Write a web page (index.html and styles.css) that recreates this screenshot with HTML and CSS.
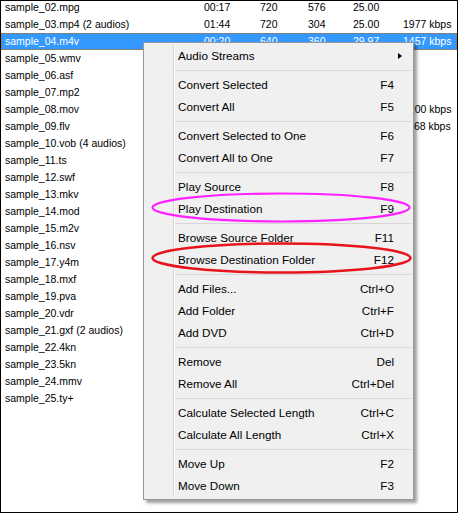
FILE: index.html
```html
<!DOCTYPE html>
<html>
<head>
<meta charset="utf-8">
<title>File list context menu</title>
<link rel="stylesheet" href="styles.css">
</head>
<body>
<div class="frame">
  <div class="list">
    <div class="row"><span>sample_02.mpg</span><span>00:17</span><span>720</span><span>576</span><span>25.00</span><span></span></div>
    <div class="row"><span>sample_03.mp4 (2 audios)</span><span>01:44</span><span>720</span><span>304</span><span>25.00</span><span>1977 kbps</span></div>
    <div class="row sel"><span>sample_04.m4v</span><span>00:20</span><span>640</span><span>360</span><span>29.97</span><span>1457 kbps</span></div>
    <div class="row"><span>sample_05.wmv</span></div>
    <div class="row"><span>sample_06.asf</span></div>
    <div class="row"><span>sample_07.mp2</span></div>
    <div class="row"><span>sample_08.mov</span><span></span><span></span><span></span><span></span><span>2200 kbps</span></div>
    <div class="row"><span>sample_09.flv</span><span></span><span></span><span></span><span></span><span>1168 kbps</span></div>
    <div class="row"><span>sample_10.vob (4 audios)</span></div>
    <div class="row"><span>sample_11.ts</span></div>
    <div class="row"><span>sample_12.swf</span></div>
    <div class="row"><span>sample_13.mkv</span></div>
    <div class="row"><span>sample_14.mod</span></div>
    <div class="row"><span>sample_15.m2v</span></div>
    <div class="row"><span>sample_16.nsv</span></div>
    <div class="row"><span>sample_17.y4m</span></div>
    <div class="row"><span>sample_18.mxf</span></div>
    <div class="row"><span>sample_19.pva</span></div>
    <div class="row"><span>sample_20.vdr</span></div>
    <div class="row"><span>sample_21.gxf (2 audios)</span></div>
    <div class="row"><span>sample_22.4kn</span></div>
    <div class="row"><span>sample_23.5kn</span></div>
    <div class="row"><span>sample_24.mmv</span></div>
    <div class="row"><span>sample_25.ty+</span></div>
  </div>

  <div class="menu">
    <div class="item"><span>Audio Streams</span><span></span><span class="sub"><i class="arrow"></i></span></div>
    <div class="sep"></div>
    <div class="item"><span>Convert Selected</span><span>F4</span><span></span></div>
    <div class="item"><span>Convert All</span><span>F5</span><span></span></div>
    <div class="sep"></div>
    <div class="item"><span>Convert Selected to One</span><span>F6</span><span></span></div>
    <div class="item"><span>Convert All to One</span><span>F7</span><span></span></div>
    <div class="sep"></div>
    <div class="item"><span>Play Source</span><span>F8</span><span></span></div>
    <div class="item"><span>Play Destination</span><span>F9</span><span></span></div>
    <div class="sep"></div>
    <div class="item"><span>Browse Source Folder</span><span>F11</span><span></span></div>
    <div class="item"><span>Browse Destination Folder</span><span>F12</span><span></span></div>
    <div class="sep"></div>
    <div class="item"><span>Add Files...</span><span>Ctrl+O</span><span></span></div>
    <div class="item"><span>Add Folder</span><span>Ctrl+F</span><span></span></div>
    <div class="item"><span>Add DVD</span><span>Ctrl+D</span><span></span></div>
    <div class="sep"></div>
    <div class="item"><span>Remove</span><span>Del</span><span></span></div>
    <div class="item"><span>Remove All</span><span>Ctrl+Del</span><span></span></div>
    <div class="sep"></div>
    <div class="item"><span>Calculate Selected Length</span><span>Ctrl+C</span><span></span></div>
    <div class="item"><span>Calculate All Length</span><span>Ctrl+X</span><span></span></div>
    <div class="sep"></div>
    <div class="item"><span>Move Up</span><span>F2</span><span></span></div>
    <div class="item"><span>Move Down</span><span>F3</span><span></span></div>
  </div>

  <svg class="marks" viewBox="0 0 459 515" width="459" height="515">
    <ellipse cx="281" cy="207.5" rx="128.5" ry="14" fill="none" stroke="#ff22ff" stroke-width="2.2"/>
    <ellipse cx="281.5" cy="258" rx="129" ry="14.5" fill="none" stroke="#e8141c" stroke-width="2.6"/>
  </svg>
</div>
</body>
</html>
```

FILE: styles.css
```css
html, body {
  margin: 0;
  padding: 0;
  background: #ffffff;
}

.frame {
  position: relative;
  width: 458px;
  height: 513px;
  box-sizing: border-box;
  border: 1px solid #000000;
  overflow: hidden;
  background: #ffffff;
  font-family: "Liberation Sans", Arial, sans-serif;
}

.list {
  margin-top: -2px;
  font-size: 10.5px;
  color: #000000;
}

.row {
  display: grid;
  grid-template-columns: 199px 56px 48px 45px 50px 1fr;
  height: 17px;
  line-height: 17px;
  padding-left: 4px;
  white-space: nowrap;
}

.row.sel {
  background: #3399ff;
  color: #ffffff;
  outline: 1px dotted #cc6600;
  outline-offset: -1px;
}

.menu {
  position: absolute;
  left: 142px;
  top: 41px;
  width: 271px;
  box-sizing: border-box;
  border: 1px solid #979797;
  padding: 2px;
  background:
    linear-gradient(to right, transparent 27px, #d7d7d7 27px, #d7d7d7 28px, #ffffff 28px, #ffffff 29px, transparent 29px) content-box,
    #f0f0f0;
  box-shadow: 3px 3px 3px rgba(0, 0, 0, 0.38);
  font-size: 11.7px;
  color: #000000;
}

.item {
  display: grid;
  grid-template-columns: 1fr auto 17px;
  height: 22px;
  line-height: 22px;
  padding-left: 32px;
  white-space: nowrap;
}

.sub {
  display: flex;
  align-items: center;
}

.arrow {
  display: block;
  width: 0;
  height: 0;
  margin-left: 4px;
  border-left: 4px solid #000000;
  border-top: 3.5px solid transparent;
  border-bottom: 3.5px solid transparent;
}

.sep {
  height: 0;
  border-top: 1px solid #d7d7d7;
  margin: 3px 0 3px 29px;
}

.marks {
  position: absolute;
  left: -1px;
  top: -1px;
  pointer-events: none;
}
```
